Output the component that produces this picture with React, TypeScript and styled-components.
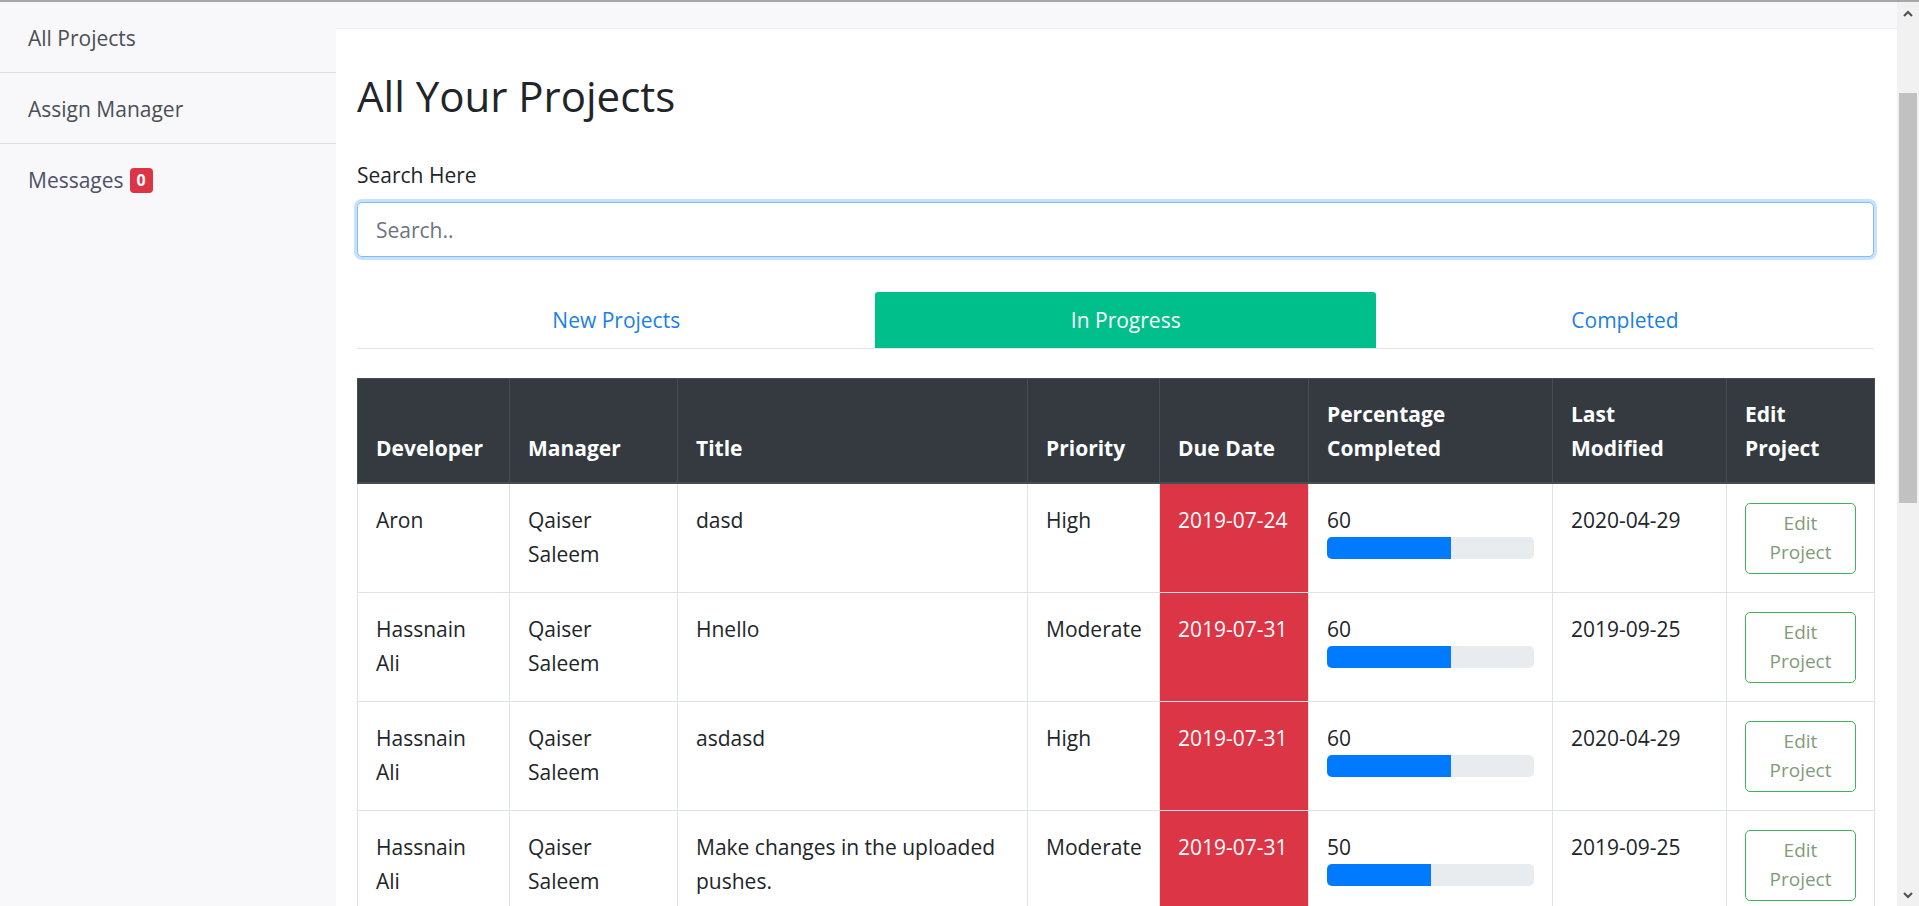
import React from 'react';
import styled, { createGlobalStyle } from 'styled-components';

const GlobalStyle = createGlobalStyle`
    html, body {
        margin: 0;
        padding: 0;
        overflow: hidden;
    }
    body {
        font-family: 'Open Sans', 'Noto Sans', 'Liberation Sans', sans-serif;
        color: #212529;
    }
    * {
        box-sizing: border-box;
    }
`;

const Shell = styled.div`
    display: flex;
    height: 906px;
    overflow: hidden;
    border-top: 2px solid #a7a7a9;
    background: #f8f8fa;
`;

const Sidebar = styled.nav`
    flex: 0 0 336px;
    display: flex;
    flex-direction: column;
`;

const NavItem = styled.a<{ $tint?: string; $last?: boolean }>`
    display: flex;
    align-items: center;
    gap: 6px;
    padding: 19px 28px 17px;
    line-height: 34px;
    font-size: 21px;
    color: ${(p) => p.$tint || '#4a4f57'};
    text-decoration: none;
    border-bottom: ${(p) => (p.$last ? 'none' : '1px solid #dcdde0')};
`;

const Badge = styled.span`
    display: inline-flex;
    align-items: center;
    justify-content: center;
    width: 23px;
    height: 25px;
    border-radius: 4px;
    background: #dc3545;
    color: #fff;
    font-size: 16px;
    font-weight: 700;
    line-height: 1;
`;

const Content = styled.main`
    flex: 1;
    min-width: 0;
    padding-top: 26px;
`;

const Panel = styled.div`
    height: 100%;
    background: #fff;
    border-top: 1px solid #ececef;
    padding: 0 23px 0 21px;
`;

const Title = styled.h1`
    margin: 42px 0 37px;
    font-size: 42px;
    font-weight: 400;
    line-height: 50px;
    color: #212529;
`;

const Label = styled.label`
    display: block;
    font-size: 21px;
    line-height: 34px;
    margin-bottom: 10px;
    color: #212529;
`;

const SearchInput = styled.input`
    display: block;
    width: 100%;
    height: 55px;
    padding: 0 18px;
    font-family: inherit;
    font-size: 21px;
    color: #495057;
    border: 1px solid #80bdff;
    border-radius: 5px;
    box-shadow: 0 0 0 3px rgba(0, 123, 255, 0.22);
    outline: none;
    &::placeholder {
        color: #6c757d;
    }
`;

const Tabs = styled.div`
    display: flex;
    margin-top: 35px;
    border-bottom: 1px solid #e3e5e8;
`;

const Tab = styled.a<{ $active?: boolean }>`
    flex: 1 1 auto;
    text-align: center;
    padding: 0 22px;
    height: 56px;
    line-height: 56px;
    font-size: 21px;
    color: ${(p) => (p.$active ? '#fff' : '#1a7fe6')};
    background: ${(p) => (p.$active ? '#00bf8b' : 'transparent')};
    border-radius: 3px 3px 0 0;
    cursor: pointer;
`;

const Table = styled.table`
    width: 100%;
    margin-top: 29px;
    border-collapse: collapse;
    table-layout: fixed;
    font-size: 21px;
    line-height: 34px;
`;

const Th = styled.th`
    padding: 18px 18px 17px;
    text-align: left;
    vertical-align: bottom;
    font-weight: 700;
    color: #fff;
    background: #343a40;
    border: 1px solid #454d55;
    border-bottom-width: 2px;
`;

const Td = styled.td<{ $overdue?: boolean }>`
    padding: 18.5px 18px;
    vertical-align: top;
    border: 1px solid #dee2e6;
    color: ${(p) => (p.$overdue ? '#fff' : '#212529')};
    background: ${(p) => (p.$overdue ? '#dc3545' : '#fff')};
`;

const Progress = styled.div`
    height: 22px;
    border-radius: 5px;
    background: #e9ecef;
    overflow: hidden;
`;

const ProgressFill = styled.div`
    height: 100%;
    background: #007bff;
`;

const EditButton = styled.button`
    display: block;
    width: 100%;
    padding: 5px 11px;
    font-family: inherit;
    font-size: 19px;
    line-height: 29.5px;
    color: #7f9c78;
    background: transparent;
    border: 1px solid #3cb55a;
    border-radius: 5px;
    cursor: pointer;
`;

const ScrollBar = styled.div`
    flex: 0 0 22px;
    display: flex;
    flex-direction: column;
    background: #f1f1f1;
`;

const ScrollArrow = styled.div`
    height: 22px;
    display: flex;
    align-items: center;
    justify-content: center;
`;

const ScrollTrack = styled.div`
    flex: 1;
    padding: 69px 2px 0;
`;

const ScrollThumb = styled.div`
    height: 410px;
    background: #c1c1c1;
`;

const Chevron = ({ up }: { up?: boolean }) => (
    <svg width="10" height="7" viewBox="0 0 10 7">
        <path
            d={up ? 'M1 6 L5 2 L9 6' : 'M1 1 L5 5 L9 1'}
            fill="none"
            stroke="#505050"
            strokeWidth="2"
        />
    </svg>
);

const columns = [
    { label: 'Developer', width: 152 },
    { label: 'Manager', width: 168 },
    { label: 'Title', width: 350 },
    { label: 'Priority', width: 132 },
    { label: 'Due Date', width: 149 },
    { label: 'Percentage Completed', width: 244 },
    { label: 'Last Modified', width: 174 },
    { label: 'Edit Project', width: 148 },
];

const projects = [
    { developer: 'Aron', manager: 'Qaiser Saleem', title: 'dasd', priority: 'High', due: '2019-07-24', done: 60, modified: '2020-04-29' },
    { developer: 'Hassnain Ali', manager: 'Qaiser Saleem', title: 'Hnello', priority: 'Moderate', due: '2019-07-31', done: 60, modified: '2019-09-25' },
    { developer: 'Hassnain Ali', manager: 'Qaiser Saleem', title: 'asdasd', priority: 'High', due: '2019-07-31', done: 60, modified: '2020-04-29' },
    { developer: 'Hassnain Ali', manager: 'Qaiser Saleem', title: 'Make changes in the uploaded pushes.', priority: 'Moderate', due: '2019-07-31', done: 50, modified: '2019-09-25' },
];

export default function App() {
    return (
        <>
            <GlobalStyle />
            <Shell>
                <Sidebar>
                    <NavItem>All Projects</NavItem>
                    <NavItem>Assign Manager</NavItem>
                    <NavItem $tint="#4d5068" $last>
                        Messages <Badge>0</Badge>
                    </NavItem>
                </Sidebar>
                <Content>
                    <Panel>
                        <Title>All Your Projects</Title>
                        <Label htmlFor="search">Search Here</Label>
                        <SearchInput id="search" placeholder="Search.." />
                        <Tabs>
                            <Tab>New Projects</Tab>
                            <Tab $active>In Progress</Tab>
                            <Tab>Completed</Tab>
                        </Tabs>
                        <Table>
                            <colgroup>
                                {columns.map((c) => (
                                    <col key={c.label} style={{ width: c.width }} />
                                ))}
                            </colgroup>
                            <thead>
                                <tr>
                                    {columns.map((c) => (
                                        <Th key={c.label}>{c.label}</Th>
                                    ))}
                                </tr>
                            </thead>
                            <tbody>
                                {projects.map((p, i) => (
                                    <tr key={i}>
                                        <Td>{p.developer}</Td>
                                        <Td>{p.manager}</Td>
                                        <Td>{p.title}</Td>
                                        <Td>{p.priority}</Td>
                                        <Td $overdue>{p.due}</Td>
                                        <Td>
                                            {p.done}
                                            <Progress>
                                                <ProgressFill style={{ width: `${p.done}%` }} />
                                            </Progress>
                                        </Td>
                                        <Td>{p.modified}</Td>
                                        <Td>
                                            <EditButton>Edit Project</EditButton>
                                        </Td>
                                    </tr>
                                ))}
                            </tbody>
                        </Table>
                    </Panel>
                </Content>
                <ScrollBar>
                    <ScrollArrow>
                        <Chevron up />
                    </ScrollArrow>
                    <ScrollTrack>
                        <ScrollThumb />
                    </ScrollTrack>
                    <ScrollArrow>
                        <Chevron />
                    </ScrollArrow>
                </ScrollBar>
            </Shell>
        </>
    );
}
